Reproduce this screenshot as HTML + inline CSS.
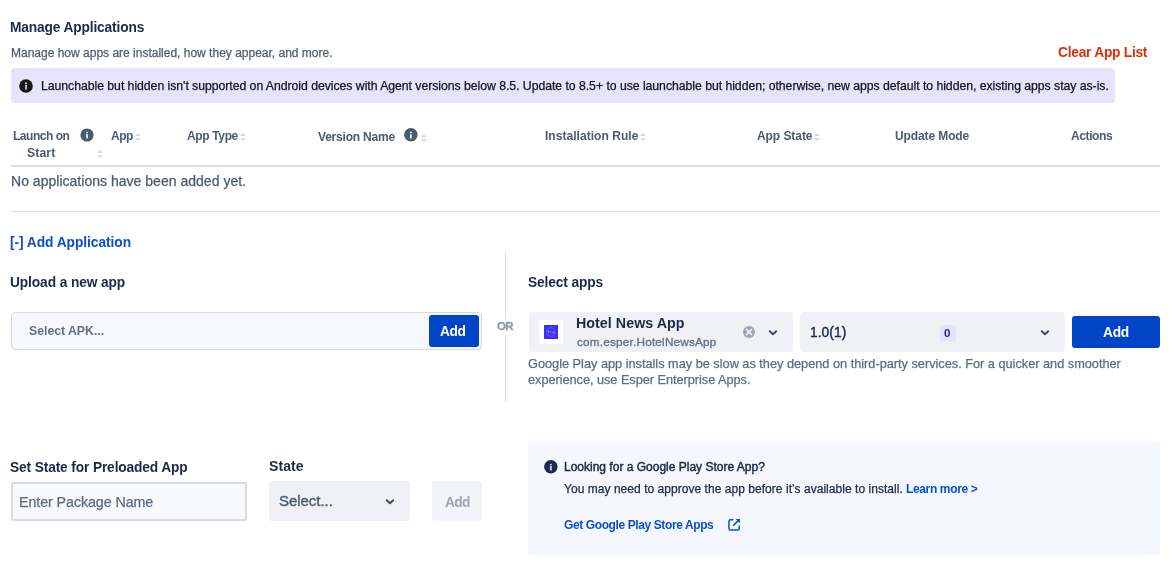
<!DOCTYPE html>
<html><head><meta charset="utf-8">
<style>
html,body{margin:0;padding:0;background:#fff;}
body{width:1176px;height:567px;position:relative;overflow:hidden;font-family:"Liberation Sans",sans-serif;}
.a{position:absolute;white-space:nowrap;line-height:1;will-change:transform;}
.s{position:absolute;}
</style></head><body>
<!-- banner -->
<div class="s" style="left:11px;top:68px;width:1104px;height:35px;background:#e6e3fd;border-radius:4px;"></div>
<svg class="s" style="left:19px;top:79px" width="14" height="14" viewBox="0 0 14 14"><circle cx="7" cy="7" r="6.8" fill="#161616"/><rect x="6.1" y="6" width="1.8" height="4.6" fill="#d0d0d0"/><rect x="6.1" y="3.4" width="1.8" height="1.8" fill="#d0d0d0"/></svg>
<!-- header icons -->
<svg class="s" style="left:80px;top:128px" width="14" height="14" viewBox="0 0 14 14"><circle cx="7" cy="7" r="6.6" fill="#4b5a72"/><rect x="6.05" y="3.8" width="1.9" height="1.5" fill="#e4e7ec"/><rect x="6.05" y="6.2" width="1.9" height="4.2" fill="#e4e7ec"/></svg>
<svg class="s" style="left:404px;top:128px" width="14" height="14" viewBox="0 0 14 14"><circle cx="6.9" cy="6.8" r="6.8" fill="#4b5a72"/><rect x="5.9" y="3.7" width="2" height="1.5" fill="#e4e7ec"/><rect x="5.9" y="6.3" width="2" height="4.2" fill="#e4e7ec"/></svg>
<!-- sort icons -->
<svg class="s" style="left:97px;top:150px" width="6" height="8" viewBox="0 0 6 8"><path d="M0 3L3 0L6 3Z M0 5L6 5L3 8Z" fill="#d5d9e0"/></svg>
<svg class="s" style="left:135px;top:133px" width="6" height="8" viewBox="0 0 6 8"><path d="M0 3L3 0L6 3Z M0 5L6 5L3 8Z" fill="#d5d9e0"/></svg>
<svg class="s" style="left:240px;top:133px" width="6" height="8" viewBox="0 0 6 8"><path d="M0 3L3 0L6 3Z M0 5L6 5L3 8Z" fill="#d5d9e0"/></svg>
<svg class="s" style="left:421px;top:134px" width="6" height="8" viewBox="0 0 6 8"><path d="M0 3L3 0L6 3Z M0 5L6 5L3 8Z" fill="#d5d9e0"/></svg>
<svg class="s" style="left:640px;top:133px" width="6" height="8" viewBox="0 0 6 8"><path d="M0 3L3 0L6 3Z M0 5L6 5L3 8Z" fill="#d5d9e0"/></svg>
<svg class="s" style="left:814px;top:133px" width="6" height="8" viewBox="0 0 6 8"><path d="M0 3L3 0L6 3Z M0 5L6 5L3 8Z" fill="#d5d9e0"/></svg>
<!-- dividers -->
<div class="s" style="left:11px;top:165px;width:1149px;height:2px;background:#d8dbe1;"></div>
<div class="s" style="left:11px;top:211px;width:1149px;height:1px;background:#dcdfe5;"></div>
<!-- upload input -->
<div class="s" style="left:11px;top:312px;width:469px;height:36px;background:#f7f8fb;border:1px solid #d5d9e0;border-radius:4px;"></div>
<div class="s" style="left:429px;top:315px;width:50px;height:32px;background:#0044c8;border-radius:3px;"></div>
<!-- vertical divider + OR -->
<div class="s" style="left:505px;top:252px;width:1px;height:150px;background:#dcdfe5;"></div>
<div class="s" style="left:495px;top:319px;width:22px;height:16px;background:#fff;"></div>
<!-- app select -->
<div class="s" style="left:529px;top:312px;width:264px;height:40px;background:#f0f1f5;border-radius:4px;"></div>
<div class="s" style="left:539px;top:320px;width:24px;height:24px;background:#fff;"></div>
<svg class="s" style="left:544px;top:325px" width="14" height="14" viewBox="0 0 14 14"><rect width="14" height="14" fill="#3f30f0"/><circle cx="7" cy="7" r="4.3" stroke="#8f86f7" stroke-width="0.8" fill="none" stroke-dasharray="1.2 0.8"/><path d="M4.5 5.5V8.5M9.5 5.5V8.5M3.5 6L10.5 8" stroke="#8f86f7" stroke-width="0.7"/></svg>
<svg class="s" style="left:743px;top:326px" width="12" height="12" viewBox="0 0 12 12"><circle cx="6" cy="6" r="6" fill="#9da6b4"/><line x1="3.5" y1="3.5" x2="8.5" y2="8.5" stroke="#f4f5f8" stroke-width="1.7" stroke-linecap="round"/><line x1="8.5" y1="3.5" x2="3.5" y2="8.5" stroke="#f4f5f8" stroke-width="1.7" stroke-linecap="round"/></svg>
<svg class="s" style="left:768px;top:328.5px" width="10" height="8" viewBox="0 0 10 8"><path d="M1.8 2.3L5 5.3L8.2 2.3" stroke="#3e4c68" stroke-width="2" stroke-linecap="round" stroke-linejoin="round" fill="none"/></svg>
<!-- version select -->
<div class="s" style="left:800px;top:312px;width:265px;height:40px;background:#f0f1f5;border-radius:4px;"></div>
<div class="s" style="left:940px;top:325px;width:16px;height:16px;background:#e4e1fb;border-radius:3px;"></div>
<svg class="s" style="left:1040px;top:328.6px" width="10" height="8" viewBox="0 0 10 8"><path d="M1.8 2.3L5 5.3L8.2 2.3" stroke="#3e4c68" stroke-width="2" stroke-linecap="round" stroke-linejoin="round" fill="none"/></svg>
<div class="s" style="left:1072px;top:316px;width:88px;height:32px;background:#0044c8;border-radius:3px;"></div>
<!-- preloaded -->
<div class="s" style="left:11px;top:482px;width:232px;height:35px;background:#f8f9fb;border:2px solid #d8dbe1;border-radius:2px;"></div>
<div class="s" style="left:269px;top:481px;width:141px;height:40px;background:#f0f1f5;border-radius:3px;"></div>
<svg class="s" style="left:385px;top:497.5px" width="10" height="8" viewBox="0 0 10 8"><path d="M1.8 2.3L5 5.3L8.2 2.3" stroke="#3e4c68" stroke-width="2" stroke-linecap="round" stroke-linejoin="round" fill="none"/></svg>
<div class="s" style="left:432px;top:481px;width:50px;height:40px;background:#f3f4f7;border-radius:3px;"></div>
<!-- google play panel -->
<div class="s" style="left:528px;top:442px;width:632px;height:113px;background:#f4f7fd;"></div>
<svg class="s" style="left:544px;top:460px" width="14" height="14" viewBox="0 0 14 14"><circle cx="6.85" cy="6.85" r="6.75" fill="#1b2a48"/><rect x="5.9" y="3.9" width="1.9" height="1.3" fill="#c9cdd5"/><rect x="5.9" y="5.9" width="1.9" height="4.6" fill="#c9cdd5"/></svg>
<svg class="s" style="left:727px;top:518px" width="14" height="14" viewBox="0 0 14 14"><path d="M5.8 1.65H3.45Q1.95 1.65 1.95 3.15V10.55Q1.95 12.05 3.45 12.05H10.75Q12.25 12.05 12.25 10.55V8.1" stroke="#0b4fcc" stroke-width="1.5" stroke-linecap="round" fill="none"/><path d="M6.6 7.3L11 2.9" stroke="#0b4fcc" stroke-width="1.6" stroke-linecap="round"/><path d="M8.6 0.9H13V5.3Z" fill="#0b4fcc"/></svg>

<div class="a" id="t0" style="left:10.30px;top:21px;font-size:13.75px;font-weight:bold;color:#1b2a48;letter-spacing:-0.150px;">Manage Applications</div>
<div class="a" id="t1" style="left:10.68px;top:47px;font-size:12.0px;font-weight:normal;color:#4f5c74;letter-spacing:-0.000px;-webkit-text-stroke:0.25px currentColor;">Manage how apps are installed, how they appear, and more.</div>
<div class="a" id="t2" style="left:1058.30px;top:46px;font-size:13.75px;font-weight:bold;color:#d6300e;letter-spacing:-0.251px;">Clear App List</div>
<div class="a" id="t3" style="left:40.68px;top:80px;font-size:12.25px;font-weight:normal;color:#141418;letter-spacing:-0.038px;-webkit-text-stroke:0.25px currentColor;">Launchable but hidden isn't supported on Android devices with Agent versions below 8.5. Update to 8.5+ to use launchable but hidden; otherwise, new apps default to hidden, existing apps stay as-is.</div>
<div class="a" id="t4" style="left:12.68px;top:130px;font-size:12.0px;font-weight:bold;color:#4b5a72;letter-spacing:-0.471px;">Launch on</div>
<div class="a" id="t5" style="left:110.86px;top:130px;font-size:12.0px;font-weight:bold;color:#4b5a72;letter-spacing:-0.540px;">App</div>
<div class="a" id="t6" style="left:186.52px;top:130px;font-size:12.0px;font-weight:bold;color:#4b5a72;letter-spacing:-0.357px;">App Type</div>
<div class="a" id="t7" style="left:318.48px;top:131px;font-size:12.0px;font-weight:bold;color:#4b5a72;letter-spacing:-0.210px;">Version Name</div>
<div class="a" id="t8" style="left:544.68px;top:130px;font-size:12.0px;font-weight:bold;color:#4b5a72;letter-spacing:0.039px;">Installation Rule</div>
<div class="a" id="t9" style="left:757.00px;top:130px;font-size:12.0px;font-weight:bold;color:#4b5a72;letter-spacing:-0.065px;">App State</div>
<div class="a" id="t10" style="left:895.20px;top:130px;font-size:12.0px;font-weight:bold;color:#4b5a72;letter-spacing:-0.108px;">Update Mode</div>
<div class="a" id="t11" style="left:1071.14px;top:130px;font-size:12.0px;font-weight:bold;color:#4b5a72;letter-spacing:-0.390px;">Actions</div>
<div class="a" id="t12" style="left:27.20px;top:147px;font-size:12.25px;font-weight:bold;color:#4b5a72;letter-spacing:0.082px;">Start</div>
<div class="a" id="t13" style="left:10.54px;top:174px;font-size:14.0px;font-weight:normal;color:#4b5a72;letter-spacing:0.021px;-webkit-text-stroke:0.25px currentColor;">No applications have been added yet.</div>
<div class="a" id="t14" style="left:10.30px;top:236px;font-size:13.75px;font-weight:bold;color:#0b4fcc;letter-spacing:-0.050px;">[-] Add Application</div>
<div class="a" id="t15" style="left:10.30px;top:276px;font-size:13.75px;font-weight:bold;color:#1b2a48;letter-spacing:-0.108px;">Upload a new app</div>
<div class="a" id="t16" style="left:28.54px;top:325px;font-size:12.25px;font-weight:bold;color:#637088;letter-spacing:-0.002px;">Select APK...</div>
<div class="a" id="t17" style="left:440.48px;top:325px;font-size:13.75px;font-weight:bold;color:#fff;letter-spacing:-0.450px;">Add</div>
<div class="a" id="t18" style="left:497.30px;top:321px;font-size:11.5px;font-weight:bold;color:#8f99a9;letter-spacing:-0.600px;-webkit-text-stroke:0.3px currentColor;">OR</div>
<div class="a" id="t19" style="left:527.54px;top:276px;font-size:13.75px;font-weight:bold;color:#1b2a48;letter-spacing:-0.126px;">Select apps</div>
<div class="a" id="t20" style="left:576.44px;top:316px;font-size:14.25px;font-weight:bold;color:#1b2a48;letter-spacing:0.042px;">Hotel News App</div>
<div class="a" id="t21" style="left:577.24px;top:336px;font-size:11.75px;font-weight:normal;color:#66738a;letter-spacing:0.200px;-webkit-text-stroke:0.25px currentColor;-webkit-text-stroke:0.35px currentColor;">com.esper.HotelNewsApp</div>
<div class="a" id="t22" style="left:809.68px;top:326px;font-size:13.75px;font-weight:normal;color:#1b2a48;letter-spacing:0.072px;-webkit-text-stroke:0.25px currentColor;-webkit-text-stroke:0.4px currentColor;">1.0(1)</div>
<div class="a" id="t23" style="left:944.48px;top:328px;font-size:11.5px;font-weight:bold;color:#2e2580;letter-spacing:0.000px;">0</div>
<div class="a" id="t24" style="left:1103.00px;top:326px;font-size:13.75px;font-weight:bold;color:#fff;letter-spacing:-0.270px;">Add</div>
<div class="a" id="t25" style="left:528.48px;top:358px;font-size:12.75px;font-weight:normal;color:#5d6b82;letter-spacing:-0.010px;-webkit-text-stroke:0.25px currentColor;">Google Play app installs may be slow as they depend on third-party services. For a quicker and smoother</div>
<div class="a" id="t26" style="left:528.48px;top:374px;font-size:12.75px;font-weight:normal;color:#5d6b82;letter-spacing:-0.041px;-webkit-text-stroke:0.25px currentColor;">experience, use Esper Enterprise Apps.</div>
<div class="a" id="t27" style="left:10.30px;top:461px;font-size:13.75px;font-weight:bold;color:#1b2a48;letter-spacing:-0.138px;">Set State for Preloaded App</div>
<div class="a" id="t28" style="left:18.68px;top:495px;font-size:14.25px;font-weight:normal;color:#5d6b82;letter-spacing:-0.070px;-webkit-text-stroke:0.25px currentColor;">Enter Package Name</div>
<div class="a" id="t29" style="left:268.58px;top:459px;font-size:14.0px;font-weight:bold;color:#1b2a48;letter-spacing:0.082px;">State</div>
<div class="a" id="t30" style="left:279.38px;top:493px;font-size:15.0px;font-weight:normal;color:#4b5a72;letter-spacing:-0.047px;-webkit-text-stroke:0.25px currentColor;-webkit-text-stroke:0.4px currentColor;">Select...</div>
<div class="a" id="t31" style="left:444.52px;top:496px;font-size:13.75px;font-weight:bold;color:#9ea6b5;letter-spacing:-0.720px;">Add</div>
<div class="a" id="t32" style="left:563.82px;top:461px;font-size:12.0px;font-weight:normal;color:#1b2a48;letter-spacing:0.000px;-webkit-text-stroke:0.25px currentColor;-webkit-text-stroke:0.45px currentColor;">Looking for a Google Play Store App?</div>
<div class="a" id="t33" style="left:564.10px;top:483px;font-size:12.0px;font-weight:normal;color:#1b2a48;letter-spacing:0.040px;-webkit-text-stroke:0.25px currentColor;">You may need to approve the app before it’s available to install.</div>
<div class="a" id="t34" style="left:905.64px;top:483px;font-size:12.0px;font-weight:bold;color:#0b4fcc;letter-spacing:-0.358px;">Learn more &gt;</div>
<div class="a" id="t35" style="left:564.38px;top:519px;font-size:12.0px;font-weight:bold;color:#0b4fcc;letter-spacing:-0.392px;">Get Google Play Store Apps</div>
</body></html>
